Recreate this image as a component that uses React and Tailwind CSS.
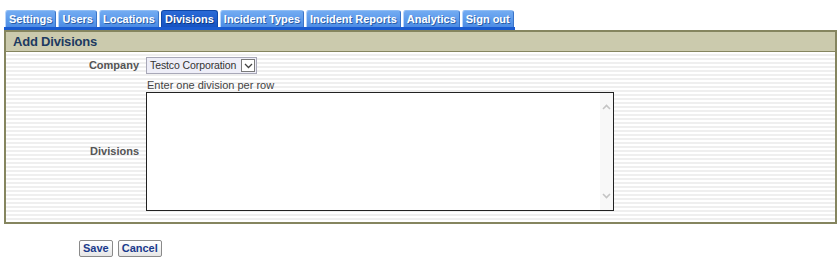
import React from 'react';

const tabs = ['Settings', 'Users', 'Locations', 'Divisions', 'Incident Types', 'Incident Reports', 'Analytics', 'Sign out'];

function Chevron({ up }) {
  return (
    <svg width="9" height="6" viewBox="0 0 9 6" className="text-[#c4c4c4]">
      <path d={up ? 'M1 5 L4.5 1.5 L8 5' : 'M1 1 L4.5 4.5 L8 1'} fill="none" stroke="currentColor" strokeWidth="1.6" />
    </svg>
  );
}

export default function App() {
  return (
    <div className="min-h-[260px] w-[840px] bg-white pt-[10px] pl-[4px] font-['Liberation_Sans',Arial,sans-serif] text-[11px]">
      {/* Tab bar */}
      <div className="inline-flex items-end gap-[2px] border-b-[3px] border-[#1a5bd0] pl-[1px] pr-[1px]">
        {tabs.map((t) => (
          <div
            key={t}
            className={
              t === 'Divisions'
                ? 'h-[17px] rounded-t-[3px] border border-b-0 border-[#0f47a8] bg-gradient-to-b from-[#2a6ad6] to-[#1553c2] px-[3px] leading-[16px] font-bold text-white [text-shadow:1px_1px_0_#0b3680]'
                : 'h-[17px] rounded-t-[3px] border border-b-0 border-t-[#8ebcf4] border-l-[#b6d4fa] border-r-[#3a74c8] bg-gradient-to-b from-[#72abf2] to-[#4c8ce4] px-[3px] leading-[16px] font-bold text-white [text-shadow:1px_1px_0_#2a5ea8]'
            }
          >
            {t}
          </div>
        ))}
      </div>

      {/* Panel */}
      <div className="w-[833px] border-2 border-[#85855f]">
        <div className="h-[20px] border-b border-[#85855f] bg-[#cbcaad] pl-[7px] text-[13px] leading-[19px] font-bold tracking-[-0.2px] text-[#1d3a61]">
          Add Divisions
        </div>
        <div className="grid grid-cols-[133px_1fr] gap-x-[7px] bg-[repeating-linear-gradient(to_bottom,#ffffff_0px,#ffffff_2px,#efefef_2px,#efefef_4px)] pt-[5px] pb-[11px]">
          <div className="flex items-center justify-end font-bold text-[#555555]">Company</div>
          <div>
            <div className="flex h-[17px] w-[111px] items-center justify-between overflow-hidden border border-[#a8a8b8] bg-[#eeeef8] pl-[3px] pr-[1px] text-[#333333]">
              <span className="whitespace-nowrap text-[10.5px] tracking-[-0.1px]">Testco Corporation</span>
              <span className="flex h-[13px] w-[14px] shrink-0 items-center justify-center border border-[#7a7a7a] bg-white">
                <svg width="9" height="6" viewBox="0 0 9 6">
                  <path d="M1 1 L4.5 4.5 L8 1" fill="none" stroke="#444" strokeWidth="1.3" />
                </svg>
              </span>
            </div>
          </div>

          <div />
          <div className="pt-[4px] pl-[1px] leading-[14px] text-[#444444]">Enter one division per row</div>

          <div className="flex items-center justify-end font-bold text-[#555555]">Divisions</div>
          <div>
            <div className="flex h-[119px] w-[468px] border border-[#222222] bg-white">
              <textarea className="flex-1 resize-none overflow-hidden bg-transparent outline-none" />
              <div className="flex w-[13px] flex-col items-center justify-between bg-[#f8f8f8] py-[11px]">
                <Chevron up />
                <Chevron />
              </div>
            </div>
          </div>
        </div>
      </div>

      {/* Buttons */}
      <div className="mt-[16px] flex gap-[5px] pl-[75px]">
        <button className="h-[17px] rounded-[2px] border border-[#8a8a8a] bg-gradient-to-b from-white to-[#e6e6e6] px-[3px] leading-[15px] font-bold text-[#1a3a8c]">
          Save
        </button>
        <button className="h-[17px] rounded-[2px] border border-[#8a8a8a] bg-gradient-to-b from-white to-[#e6e6e6] px-[3px] leading-[15px] font-bold text-[#1a3a8c]">
          Cancel
        </button>
      </div>
    </div>
  );
}
